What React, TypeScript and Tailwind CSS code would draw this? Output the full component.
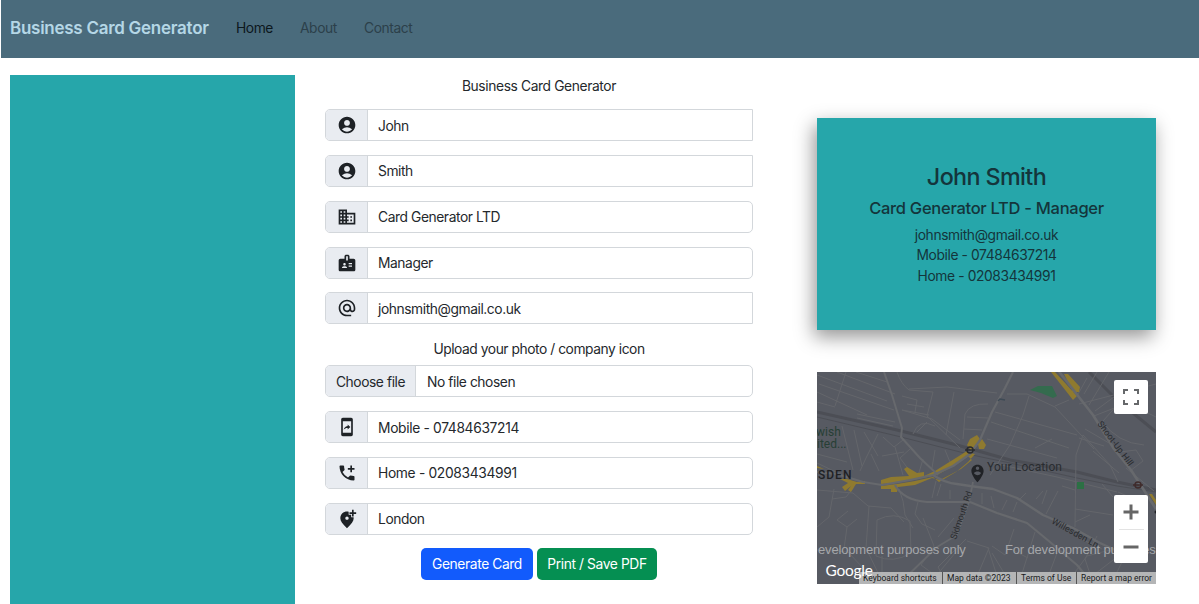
import React from "react";
import {
  MdAccountCircle,
  MdDomain,
  MdBadge,
  MdAlternateEmail,
  MdMobileScreenShare,
  MdAddIcCall,
  MdAddLocationAlt,
  MdPersonPinCircle,
} from "react-icons/md";
import type { IconType } from "react-icons";

function Navbar() {
  return (
    <nav className="ml-px flex h-[58px] items-center bg-[#4a6b7c] pl-[9px] pb-[2px]">
      <a className="w-[226px] whitespace-nowrap pt-px text-[17px] font-semibold tracking-[-0.27px] text-[#b5d7e6]">
        Business Card Generator
      </a>
      <a className="w-[64px] text-[13.8px] tracking-[-0.45px] text-[#0c171d]">Home</a>
      <a className="w-[64px] text-[13.8px] tracking-[-0.4px] text-[#2c404a]">About</a>
      <a className="text-[13.8px] tracking-[-0.4px] text-[#2c404a]">Contact</a>
    </nav>
  );
}

function Field({ icon: Icon, value, square = false }: { icon: IconType; value: string; square?: boolean }) {
  const numeric = /\d/.test(value);
  return (
    <div
      className={
        square
          ? "flex h-[32px] w-full overflow-hidden rounded-l-[5px] border border-[#d3d7db] bg-white"
          : "flex h-[32px] w-full overflow-hidden rounded-[5px] border border-[#d3d7db] bg-white"
      }
    >
      <span className="flex w-[42px] shrink-0 items-center justify-center border-r border-[#d3d7db] bg-[#e9ecf1] text-[#1e2226]">
        <Icon size={20} />
      </span>
      <span
        className={
          numeric
            ? "flex items-center whitespace-nowrap pt-[1.2px] pl-[10px] text-[13.8px] tracking-[-0.33px]"
            : "flex items-center whitespace-nowrap pt-[1.2px] pl-[10px] text-[13.8px] tracking-[-0.42px]"
        }
      >
        {value}
      </span>
    </div>
  );
}

function CardForm() {
  return (
    <main className="flex w-[428px] shrink-0 flex-col items-center">
      <p className="mb-[13.3px] h-[21px] text-[13.8px] leading-[22.5px] tracking-[-0.38px]">Business Card Generator</p>
      <div className="flex w-full flex-col gap-[13.8px]">
        <Field icon={MdAccountCircle} value="John" square />
        <Field icon={MdAccountCircle} value="Smith" square />
        <Field icon={MdDomain} value="Card Generator LTD" />
        <Field icon={MdBadge} value="Manager" />
        <Field icon={MdAlternateEmail} value="johnsmith@gmail.co.uk" square />
      </div>
      <p className="mt-[14px] mb-[6px] h-[21px] text-[13.8px] leading-[22.5px] tracking-[-0.45px]">
        Upload your photo / company icon
      </p>
      <div className="flex w-full flex-col gap-[13.8px]">
        <div className="flex h-[32px] w-full overflow-hidden rounded-[5px] border border-[#d3d7db] text-[13.8px] tracking-[-0.42px]">
          <span className="flex w-[90px] shrink-0 items-center justify-center whitespace-nowrap border-r border-[#d3d7db] bg-[#e9ecf1] pt-[1.2px]">
            Choose file
          </span>
          <span className="flex items-center pt-[1.2px] pl-[11px]">No file chosen</span>
        </div>
        <Field icon={MdMobileScreenShare} value="Mobile - 07484637214" />
        <Field icon={MdAddIcCall} value="Home - 02083434991" />
        <Field icon={MdAddLocationAlt} value="London" />
      </div>
      <div className="mt-[13px] flex gap-[4px] text-[13.8px] tracking-[-0.4px] text-white">
        <button className="h-[32px] w-[112px] whitespace-nowrap rounded-[5px] bg-[#125bfc] pt-[1.5px]">
          Generate Card
        </button>
        <button className="h-[32px] w-[120px] whitespace-nowrap rounded-[5px] bg-[#058f52] pt-[1.5px]">
          Print / Save PDF
        </button>
      </div>
    </main>
  );
}

function BusinessCard() {
  return (
    <section className="flex h-[212px] w-[339px] flex-col items-center bg-[#26a6aa] pt-[44px] text-[#14353b] shadow-[-3px_7px_18px_rgba(0,0,0,0.42)]">
      <h2 className="h-[30px] text-[23.3px] leading-[30px] font-medium tracking-[-0.6px]">John Smith</h2>
      <h3 className="mt-[6px] h-[20px] text-[16.5px] leading-[20px] font-medium tracking-[-0.28px]">
        Card Generator LTD - Manager
      </h3>
      <div className="mt-[7px] text-center text-[13.8px] leading-[20.4px] tracking-[-0.38px]">
        <p>johnsmith@gmail.co.uk</p>
        <p>Mobile - 07484637214</p>
        <p>Home - 02083434991</p>
      </div>
    </section>
  );
}

function MapDrawing() {
  return (
    <svg width="339" height="212" viewBox="0 0 339 212" className="block">
      <rect width="339" height="212" fill="#575a62" />
      {/* railways */}
      <g fill="none" stroke="#4c4e55">
        <path d="M0 40 L80 58 L140 73 L193 88 L260 100 L300 110 L339 118" strokeWidth="3" />
        <path d="M0 45 L80 64 L155 83" strokeWidth="1" />
        <path d="M272 0 L300 28 L339 60" strokeWidth="3" />
        <path d="M155 83 L193 91 L260 106 L300 114 L339 120" strokeWidth="1" />
      </g>
      {/* side streets */}
      <g fill="none" stroke="#64666b" strokeWidth="1">
        <path d="M0 3 L70 29 M2 12 L77 38 M0 20 L50 43 M20 0 L78 22 M29 0 L18 34 M39 0 L70 10 M0 30 L18 35" />
        <path d="M80 0 Q84 12 92 18 L116 20 M110 44 L143 76 M116 20 L110 44 M137 20 L129 63 M85 38 L112 43 M85 24 L100 28 L98 40 M90 32 L107 35" />
        <path d="M92 17 L130 15 L180 21 M85 38 L115 47 L143 68 M96 62 Q102 46 118 54 M100 60 L110 50 M40 42 L78 50 M40 46 L76 54" />
        <path d="M146 67 L148 42 Q153 31 171 32 M150 45 L171 46 M147 57 L165 58" />
        <path d="M25 54 L36 98 M37 58 L45 94 M47 60 L61 84 M61 62 L49 86 L43 99 M66 65 L77 75 L86 68 M78 75 L86 103 M54 82 L62 99 M0 82 L30 90 M0 91 L21 101" />
        <path d="M93 77 L83 86 L92 98 M65 84 L87 80 M106 87 L101 104 M118 78 L115 96 M128 78 L133 90" />
        <path d="M190 22 L210 22 L238 35 L277 77 M178 40 L260 63 M174 50 L252 76 M170 67 L240 86 M206 43 L193 73 L173 103 M212 24 L206 43 M238 34 L252 28 M266 63 L259 83 L258 155 M218 76 L235 67" />
        <path d="M262 32 L339 12 M270 6 L260 24 M280 0 L267 22 M292 0 L272 33 M305 19 L278 39 M319 12 L286 49 M277 44 L310 31 L339 45 M285 49 Q300 71 327 73" />
        <path d="M268 57 L292 71 M262 66 L287 74 M266 63 L293 93 L301 110 M276 79 L302 101 M303 80 L319 78 L326 89 L313 99" />
        <path d="M0 118 L36 121 L51 134 L74 136 L87 150 M17 117 L12 145 L0 155 M37 115 L29 125 L15 127 M52 134 L49 176 L63 205 M82 117 Q87 128 88 143 L96 156" />
        <path d="M60 148 Q77 139 93 149 L94 181 Q76 192 59 184 Z M31 139 L20 148 L30 155 L40 147 M30 155 L27 177 M0 178 L31 180 L47 197 M65 184 L65 211 M101 130 L98 142 L105 152 L118 158" />
        <path d="M106 146 L117 174 L104 193 L119 204 M119 204 L139 180 M130 211 L121 195 L149 167 M150 169 L172 176 L159 207 M171 176 L182 210 M137 146 L121 165" />
        <path d="M119 109 L115 126 M124 112 L120 124 M133 118 L133 127 M165 121 L165 132 M174 124 L177 136 M190 128 L185 138 M200 130 L196 140 M209 121 L203 127 M230 118 L225 132 M226 119 L219 127 M241 119 L229 142" />
        <path d="M258 137 L296 143 M245 114 L258 118 M197 157 L188 183 L175 174 M218 160 L203 208 M190 175 L211 186 M240 181 L231 205 M280 164 L268 187 L274 205 M260 165 L285 177 M258 150 L273 143 M285 112 L296 125 M175 181 L190 206" />
        <path d="M309 96 L337 119 M301 120 L317 127 M270 184 L250 211 M300 185 L274 205 M293 178 L270 184 M305 190 L300 200" />
        <path d="M175 91 L240 105 L300 120" />
      </g>
      {/* commercial areas */}
      <g fill="#8f7a2f" stroke="none">
        <path d="M64 108 L74 105 L92 104 L87 97 L90 95 L100 101 L107 100 L107 104 L118 99 L134 89 L150 79 L153 83 L138 93 L120 103 L96 108 L78 111 L64 112 Z" />
        <path d="M64 114 L80 112 L98 109 L116 105 L122 110 L139 100 L151 90 L158 82 L153 81 L136 92 L150 83 L155 88 L144 97 L123 108 L115 106 L98 113 L81 115 L80 120 L74 120 L74 117 L64 117 Z" />
        <path d="M150 73 L153 67 L160 63 L163 67 L158 75 L155 80 Z" />
        <path d="M161 72 L165 67 L169 73 L167 77 L162 77 Z" />
        <path d="M23 107 L30 107 L40 110 L48 109 L48 112 L39 112 L34 120 L31 118 L34 114 L28 119 L25 115 L31 111 Z M0 94 L7 97 L0 96 Z" />
        <path d="M234 0 L238 0 L260 24 L256 28 Z M247 2 L251 2 L263 15 L262 20 L256 20 Z" />
        <path d="M332 122 L335 122 L339 128 L339 133 Z M336 130 L339 137 L332 128 Z" />
      </g>
      <path d="M213 18 L221 14 L235 14 L240 24 L236 26 L224 21 Z" fill="#346b4e" />
      <rect x="260" y="110" width="7" height="7" fill="#2c7044" />
      {/* main streets */}
      <g fill="none" stroke="#67696d" strokeLinejoin="round">
        <path d="M67 0 L75 23 L85 56 L84 65 L103 86 L121 103" strokeWidth="2" />
        <path d="M196 0 L188 16 L175 40 L163 68 L153 82 L136 94 L116 103 L93 108 L65 113 L46 110 L20 102 L0 100" strokeWidth="2.2" />
        <path d="M116 103 Q128 111 140 112 L153 114 L176 117 L200 126 L226 143 L256 156 L283 171 L311 184" strokeWidth="2.4" />
        <path d="M78 113 Q86 128 110 130 L153 130 L180 141 L210 151 L233 170 L260 193 L275 211" strokeWidth="2.2" />
        <path d="M240 -3 L258 20 L276 43 L297 77 L314 98 L339 137" strokeWidth="2.6" />
        <path d="M156 110 L152 130 L140 163 L120 175 L83 211" strokeWidth="1.8" />
      </g>
      {/* stations */}
      <g fill="none" stroke="#292a2d" strokeWidth="1.5">
        <circle cx="153" cy="78" r="3" />
        <path d="M148 78 H158" />
        <g stroke="#3f2b2b">
          <circle cx="321" cy="113" r="3" />
          <path d="M316 113 H326" />
        </g>
        <path d="M181 29 L183 27 L188 28" stroke="#3e4a55" />
      </g>
      <circle cx="339" cy="140" r="1.5" fill="#202124" />
      <g fill="#273f35" className="font-['Roboto'] text-[12px]">
        <text x="-1" y="64">wish</text>
        <text x="0" y="76">ited...</text>
      </g>
      <text x="1" y="107" fill="#202124" className="font-['Roboto'] text-[12px] font-medium" letterSpacing="1">SDEN</text>
      <text x="170" y="99" fill="#292c30" className="font-['Roboto'] text-[12px]" letterSpacing=".1">Your Location</text>
      <g fill="#292b2e" className="font-['Roboto'] text-[9px]">
        <text transform="translate(280 52) rotate(53)" letterSpacing=".1">Shoot-Up Hill</text>
        <text transform="translate(139 168) rotate(-71)" letterSpacing="-.1">Sidmouth Rd</text>
        <text transform="translate(234 151) rotate(29)" letterSpacing=".1">Willesden Ln</text>
      </g>
      <g fill="#a5a7aa" className="font-['Liberation_Sans'] text-[13px]" letterSpacing="-.17">
        <text x="1" y="182">evelopment purposes only</text>
        <text x="188" y="182">For development purposes</text>
      </g>
    </svg>
  );
}

function LocationMap() {
  return (
    <section className="relative h-[212px] w-[339px] overflow-hidden font-['Roboto']">
      <MapDrawing />
      <MdPersonPinCircle size={21} className="absolute top-[91px] left-[150px] text-[#202226]" />
      <button className="absolute top-[8px] left-[297px] flex h-[34px] w-[34px] items-center justify-center rounded-[2px] bg-white">
        <svg width="16" height="16" viewBox="0 0 16 16" fill="none" stroke="#66686a" strokeWidth="2">
          <path d="M1 5 V1 H5 M11 1 H15 V5 M15 11 V15 H11 M5 15 H1 V11" />
        </svg>
      </button>
      <div className="absolute top-[123px] left-[297px] flex h-[68px] w-[34px] flex-col items-center rounded-[2px] bg-white">
        <svg width="34" height="34" viewBox="0 0 34 34" stroke="#666" strokeWidth="3">
          <path d="M9.5 17 H24.5 M17 9.5 V24.5" />
        </svg>
        <span className="h-px w-[25px] shrink-0 bg-[#e3e3e3]" />
        <svg width="34" height="33" viewBox="0 0 34 33" stroke="#666" strokeWidth="3">
          <path d="M9.5 17 H24.5" />
        </svg>
      </div>
      <div className="absolute top-[200px] left-[42px] flex h-[12px] w-[297px] bg-[#b9babb]/95 text-[8.5px] leading-[12px] whitespace-nowrap text-[#17191b]">
        <span className="w-[83px] pl-[4px]">Keyboard shortcuts</span>
        <span className="w-[74px] border-l border-[#555] pl-[4px]">Map data ©2023</span>
        <span className="w-[60px] border-l border-[#555] pl-[4px]">Terms of Use</span>
        <span className="border-l border-[#555] pl-[4px]">Report a map error</span>
      </div>
      <span className="absolute top-[188px] left-[8.5px] font-['Lato'] text-[15.5px] leading-[20px] tracking-[-0.25px] text-white">
        Google
      </span>
    </section>
  );
}

export default function App() {
  return (
    <div className="h-[604px] w-[1199px] overflow-hidden bg-white font-['Inter','Liberation_Sans',sans-serif] text-[#24282c]">
      <Navbar />
      <div className="flex pt-[17px] pl-[10px]">
        <aside className="mr-[30px] h-[529px] w-[285px] shrink-0 bg-[#26a6aa]" />
        <CardForm />
        <div className="ml-[64px] flex flex-col gap-[42px] pt-[43px]">
          <BusinessCard />
          <LocationMap />
        </div>
      </div>
    </div>
  );
}
